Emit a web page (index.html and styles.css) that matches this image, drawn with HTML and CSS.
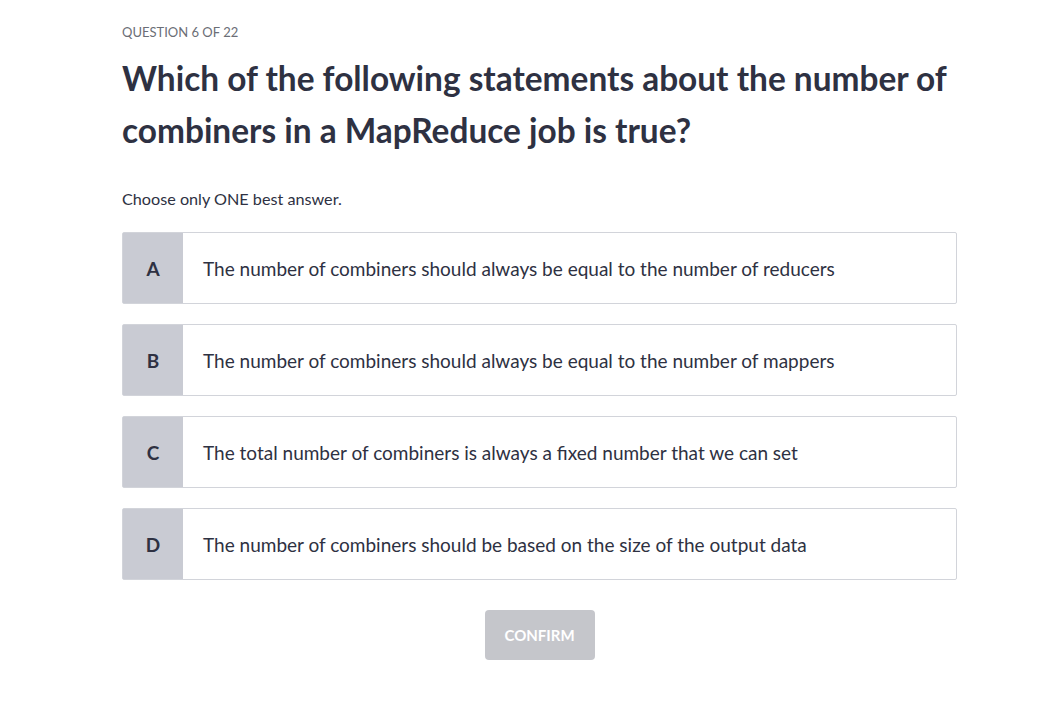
FILE: index.html
```html
<!DOCTYPE html>
<html lang="en">
<head>
<meta charset="utf-8">
<title>Question 6 of 22</title>
<link rel="stylesheet" href="styles.css">
</head>
<body>
<main class="quiz">
  <p class="counter">QUESTION 6 OF 22</p>
  <h1 class="question">Which of the following statements about the number of combiners in a MapReduce job is true?</h1>
  <p class="hint">Choose only ONE best answer.</p>
  <ul class="options">
    <li class="option"><span class="letter">A</span><span class="text">The number of combiners should always be equal to the number of reducers</span></li>
    <li class="option"><span class="letter">B</span><span class="text">The number of combiners should always be equal to the number of mappers</span></li>
    <li class="option"><span class="letter">C</span><span class="text">The total number of combiners is always a fixed number that we can set</span></li>
    <li class="option"><span class="letter">D</span><span class="text">The number of combiners should be based on the size of the output data</span></li>
  </ul>
  <div class="actions"><button class="confirm" disabled>CONFIRM</button></div>
</main>
</body>
</html>
```

FILE: styles.css
```css
* { box-sizing: border-box; }
html, body { margin: 0; padding: 0; background: #fff; }
body { font-family: Lato, "Liberation Sans", sans-serif; color: #2e3142; }
.quiz { width: 835px; margin-left: 122px; padding-top: 24px; }
.counter { margin: 0; font-size: 13px; line-height: 16px; color: #6b6e76; letter-spacing: 0; }
.question { margin: 12px 0 0; font-size: 33.4px; line-height: 52px; font-weight: 700; color: #2e3142; }
.hint { margin: 33px 0 0; font-size: 16.2px; line-height: 20px; color: #2e3142; }
.options { list-style: none; margin: 23px 0 0; padding: 0; display: flex; flex-direction: column; gap: 20px; }
.option { display: flex; height: 72px; border: 1px solid #d2d4da; border-radius: 2px; background: #fff; }
.letter { width: 60px; flex: none; background: #c9cbd3; display: flex; align-items: center; justify-content: center; font-weight: 700; font-size: 19px; color: #2e3142; }
.text { display: flex; align-items: center; padding-left: 20px; font-size: 19px; color: #2e3142; }
.actions { display: flex; justify-content: center; margin-top: 30px; }
.confirm { width: 110px; height: 50px; border: none; border-radius: 4px; background: #c5c6cb; color: #fff; font-family: Lato, "Liberation Sans", sans-serif; font-weight: 700; font-size: 15px; }
```
